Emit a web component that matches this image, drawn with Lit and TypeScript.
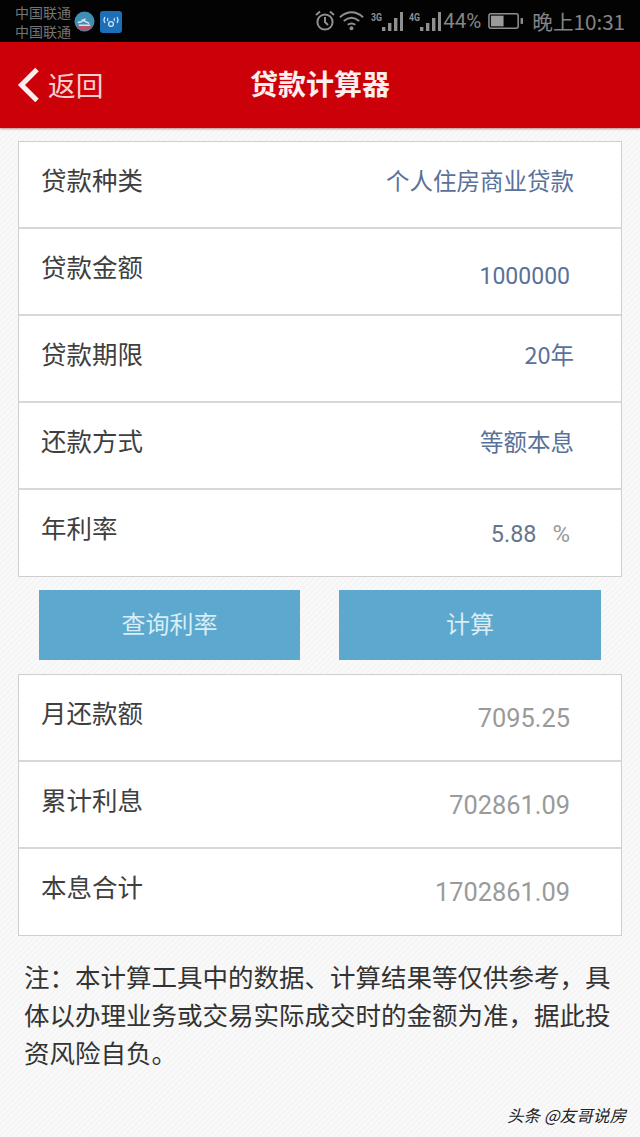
import { LitElement, html, css, svg } from "lit";
import { customElement } from "lit/decorators.js";

@customElement("app-root")
export class AppRoot extends LitElement {
  static styles = css`
    :host {
      display: block;
      width: 640px;
      height: 1137px;
      overflow: hidden;
      position: relative;
      font-family: "Noto Sans CJK SC", Roboto, sans-serif;
      background: repeating-linear-gradient(135deg, #f9f9f9 0 2px, #f5f5f5 2px 4px);
    }
    .status {
      height: 42px;
      background: #030303;
      display: flex;
      align-items: center;
      color: #8d8d8d;
      box-sizing: border-box;
      padding-left: 15px;
    }
    .carriers {
      display: flex;
      flex-direction: column;
      font-size: 14px;
      line-height: 19px;
      width: 59px;
      color: #747474;
      margin-top: 1px;
      white-space: nowrap;
    }
    .app-icons { display: flex; gap: 5px; margin-top: 2px; }
    .right {
      margin-left: auto;
      display: flex;
      align-items: center;
      padding-right: 15px;
      height: 100%;
    }
    .alarm { margin-right: 3px; }
    .wifi { margin-right: 7px; }
    .net4 { margin-left: 6px; }
    .batt { margin-left: 7px; }
    .pct { font: 20.5px Roboto, sans-serif; margin-left: 2px; color: #858585; }
    .time { font-size: 20.6px; margin-left: 8px; color: #858585; white-space: nowrap; line-height: 1; }
    .header {
      height: 86px;
      background: #cc0008;
      display: grid;
      grid-template-columns: 1fr auto 1fr;
      align-items: center;
      color: #f6e6e6;
      box-shadow: 0 1px 2px rgba(120, 0, 0, .45);
    }
    .back { display: flex; align-items: center; padding: 0 0 1px 17px; gap: 8px; font-size: 27.7px; color: #f5cfcf; line-height: 1; }
    .title { font-size: 28px; font-weight: 700; color: #fbeeee; line-height: 1; padding-bottom: 4px; }
    .content { padding: 13px 18px 0; }
    .card {
      border: 1px solid #cfcfcf;
      background: #fff;
      box-sizing: border-box;
    }
    .row {
      height: 87px;
      box-sizing: border-box;
      display: flex;
      justify-content: space-between;
      padding: 18px 47px 0 22px;
      border-bottom: 2px solid #d8d8d8;
    }
    .row:last-child { border-bottom: none; height: 86px; }
    .label { font-size: 25.5px; color: #3f3f3f; line-height: 38px; }
    .value { font-size: 23.5px; color: #5a7199; line-height: 38px; margin-top: 1px; }
    .num { font-family: Roboto, sans-serif; font-size: 23px; margin-top: 11px; margin-right: 4px; }
    .rate { display: flex; align-items: baseline; margin-top: 7px; margin-right: 4px; line-height: 38px; }
    .rate-num { font-family: Roboto, sans-serif; font-size: 23.4px; color: #66758c; }
    .unit { color: #9a9a9a; font-size: 24px; margin-left: 16px; font-family: Roboto, sans-serif; }
    .result { color: #9a9a9a; font-size: 25.4px; margin-top: 6px; }
    .buttons { display: grid; grid-template-columns: 261px 262px; justify-content: space-between; padding: 13px 21px 14px; }
    .btn {
      height: 70px;
      background: #5ca8ce;
      color: #d8edf5;
      font-size: 24px;
      display: flex;
      align-items: center;
      justify-content: center;
      padding-bottom: 6px;
      box-sizing: border-box;
    }
    .note {
      font-size: 25.5px;
      line-height: 38px;
      color: #333;
      margin: 21px 0 0;
      padding: 0 6px;
      width: 600px;
      box-sizing: border-box;
    }
    .wm {
      position: absolute;
      right: 14px;
      bottom: 13px;
      font-size: 16.6px;
      color: #222;
      font-style: italic;
      line-height: 1;
      text-shadow: 1px 1px 0 #fff;
    }
  `;

  private signal(label: string) {
    const h = [4, 8, 13, 19];
    return html`<svg width="32" height="24" viewBox="0 0 32 24" class=${label === "4G" ? "net4" : ""}>
      <text x="0" y="12" font-size="11" font-weight="700" fill="#8f8f8f" font-family="Roboto" textLength="11" lengthAdjust="spacingAndGlyphs">${label}</text>
      ${h.map((v, i) => svg`<rect x=${11 + i * 6} y=${22 - v} width="3.4" height=${v} fill="#8f8f8f"/>`)}
    </svg>`;
  }

  render() {
    const top: [string, string, boolean][] = [
      ["贷款种类", "个人住房商业贷款", false],
      ["贷款金额", "1000000", true],
      ["贷款期限", "20年", false],
      ["还款方式", "等额本息", false],
    ];
    const res = [
      ["月还款额", "7095.25"],
      ["累计利息", "702861.09"],
      ["本息合计", "1702861.09"],
    ];
    return html`
      <div class="status">
        <div class="carriers"><span>中国联通</span><span>中国联通</span></div>
        <div class="app-icons">
          <svg width="21" height="21" viewBox="0 0 22 22">
            <circle cx="11" cy="11" r="10.5" fill="#3f8fb5"/>
            <path d="M2 15a10 10 0 0 0 18 0z" fill="#b5566a"/>
            <path d="M4 12c4 0 6-2 8-4M8 9l8 4M5 15h12" stroke="#d8e4ee" stroke-width="1.5" fill="none"/>
          </svg>
          <svg width="22" height="22" viewBox="0 0 22 22">
            <rect width="22" height="22" rx="3" fill="#1c6fb8"/>
            <circle cx="11" cy="13" r="2.4" fill="none" stroke="#cfe4f5" stroke-width="1.3"/>
            <path d="M5 6q-2 3 0 6M17 6q2 3 0 6M8 7q-1 2 0 3M14 7q1 2 0 3" stroke="#cfe4f5" stroke-width="1.2" fill="none"/>
          </svg>
        </div>
        <div class="right">
          <svg class="alarm" width="22" height="24" viewBox="0 0 22 24">
            <circle cx="11" cy="13" r="7.6" fill="none" stroke="#8f8f8f" stroke-width="2"/>
            <path d="M11 8v5l3 3M2 6l4-3.5M20 6l-4-3.5" fill="none" stroke="#8f8f8f" stroke-width="2"/>
          </svg>
          <svg class="wifi" width="25" height="22" viewBox="0 0 26 22">
            <path d="M1 7q12-10 24 0M5 11q8-7 16 0M9 15q4-3 8 0" fill="none" stroke="#8f8f8f" stroke-width="2"/>
            <circle cx="13" cy="18.5" r="2" fill="#8f8f8f"/>
          </svg>
          ${this.signal("3G")}
          ${this.signal("4G")}
          <span class="pct">44%</span>
          <svg class="batt" width="36" height="18" viewBox="0 0 37 18">
            <rect x="1" y="1.5" width="30" height="15" rx="2" fill="none" stroke="#8f8f8f" stroke-width="1.6"/>
            <rect x="3" y="3.5" width="13" height="11" fill="#9a9a9a"/>
            <rect x="33.5" y="6" width="2.5" height="6" fill="#8f8f8f"/>
          </svg>
          <span class="time">晚上10:31</span>
        </div>
      </div>
      <div class="header">
        <div class="back">
          <svg width="23" height="36" viewBox="0 0 23 36">
            <path d="M20 2.5 L4.5 18 L20 33.5" fill="none" stroke="#fbeeee" stroke-width="5"/>
          </svg>
          <span>返回</span>
        </div>
        <div class="title">贷款计算器</div>
        <div></div>
      </div>
      <div class="content">
        <div class="card">
          ${top.map(
            ([l, v, n]) => html`<div class="row">
              <span class="label">${l}</span>
              <span class="value ${n ? "num" : ""}">${v}</span>
            </div>`
          )}
          <div class="row">
            <span class="label">年利率</span>
            <span class="rate"><span class="rate-num">5.88</span><span class="unit">%</span></span>
          </div>
        </div>
        <div class="buttons">
          <div class="btn">查询利率</div>
          <div class="btn">计算</div>
        </div>
        <div class="card">
          ${res.map(
            ([l, v]) => html`<div class="row">
              <span class="label">${l}</span>
              <span class="value num result">${v}</span>
            </div>`
          )}
        </div>
        <p class="note">注\uFF1A本计算工具中的数据、计算结果等仅供参考\uFF0C具体以办理业务或交易实际成交时的金额为准\uFF0C据此投资风险自负。</p>
      </div>
      <div class="wm">头条 @友哥说房</div>
    `;
  }
}
